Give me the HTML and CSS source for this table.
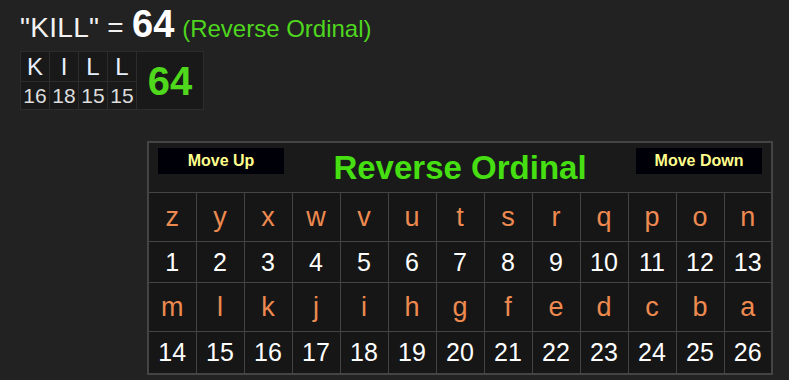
FILE: index.html
```html
<!DOCTYPE html>
<html>
<head>
<meta charset="utf-8">
<link rel="stylesheet" href="styles.css">
</head>
<body>
<div class="result"><span class="word">"KILL" = </span><span class="total">64</span> <span class="cipher">(Reverse Ordinal)</span></div>
<table class="breakdown">
  <tr><td class="l">K</td><td class="l">I</td><td class="l">L</td><td class="l">L</td><td class="sum" rowspan="2">64</td></tr>
  <tr><td class="n">16</td><td class="n">18</td><td class="n">15</td><td class="n">15</td></tr>
</table>
<table class="chart">
  <tr class="head"><td colspan="13">
    <div class="headbar">
      <button class="btn">Move Up</button>
      <span class="title">Reverse Ordinal</span>
      <button class="btn">Move Down</button>
    </div>
  </td></tr>
  <tr class="letters"><td>z</td><td>y</td><td>x</td><td>w</td><td>v</td><td>u</td><td>t</td><td>s</td><td>r</td><td>q</td><td>p</td><td>o</td><td>n</td></tr>
  <tr class="nums"><td>1</td><td>2</td><td>3</td><td>4</td><td>5</td><td>6</td><td>7</td><td>8</td><td>9</td><td>10</td><td>11</td><td>12</td><td>13</td></tr>
  <tr class="letters"><td>m</td><td>l</td><td>k</td><td>j</td><td>i</td><td>h</td><td>g</td><td>f</td><td>e</td><td>d</td><td>c</td><td>b</td><td>a</td></tr>
  <tr class="nums last"><td>14</td><td>15</td><td>16</td><td>17</td><td>18</td><td>19</td><td>20</td><td>21</td><td>22</td><td>23</td><td>24</td><td>25</td><td>26</td></tr>
</table>
</body>
</html>
```
FILE: styles.css
```css
html { background: #222222; }
body {
  margin: 0;
  padding: 8px 0 0 20px;
  font-family: "Liberation Sans", Arial, sans-serif;
  color: #eeeeee;
}
.result {
  font-size: 28px;
  line-height: 32px;
  height: 36px;
  white-space: pre;
}
.word { color: #f2f2f2; letter-spacing: 0.3px; }
.total { font-size: 38px; font-weight: bold; color: #ffffff; }
.cipher { font-size: 24px; color: #4fd61f; }

.breakdown {
  margin-top: 7px;
  border-collapse: collapse;
  background: #191919;
}
.breakdown td {
  border: 1px solid #2c2c2c;
  padding: 0;
  text-align: center;
  line-height: 1;
}
.breakdown .l { width: 28px; height: 29px; font-size: 24px; color: #e6f0ff; }
.breakdown .n { height: 27px; font-size: 21px; color: #dddddd; }
.breakdown .sum {
  width: 66px;
  font-size: 40px;
  font-weight: bold;
  color: #4fd81c;
}

.chart {
  margin: 31px 0 0 127px;
  width: 626px;
  table-layout: fixed;
  border-collapse: collapse;
  border: 2px solid #444444;
  background: #161616;
}
.chart td {
  border: 1px solid #444444;
  padding: 0;
  text-align: center;
  line-height: 1;
}
.head td { height: 49px; background: #1a1a1a; vertical-align: top; }
.headbar {
  display: flex;
  align-items: flex-start;
  justify-content: space-between;
  padding: 5px 9px 0 9px;
}
.btn {
  width: 126px;
  height: 26px;
  border: none;
  background: #000008;
  color: #ffff8c;
  font-family: "Liberation Sans", Arial, sans-serif;
  font-weight: bold;
  font-size: 16px;
  padding: 0;
}
.title {
  font-size: 33px;
  font-weight: bold;
  color: #46df12;
  margin-top: 3px;
}
.letters td { height: 48px; font-size: 27px; color: #ee8a50; }
.nums td { height: 40px; font-size: 25px; color: #ffffff; }
.nums.last td { height: 41px; }
```
